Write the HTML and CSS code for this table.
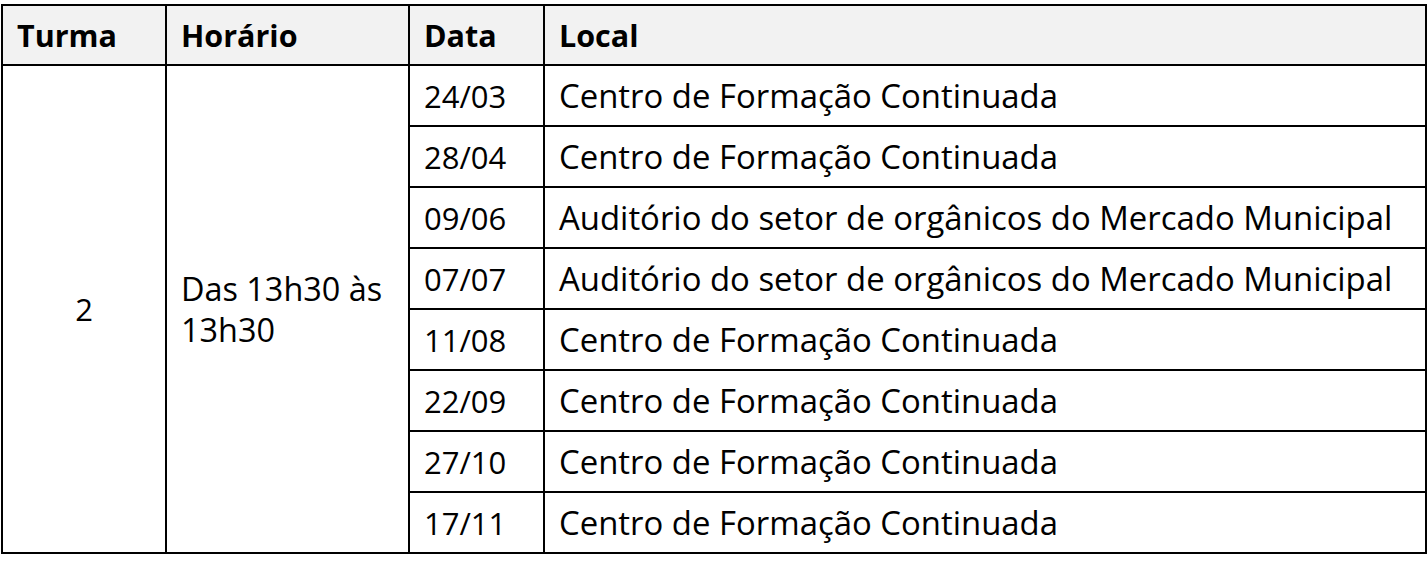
FILE: index.html
```html
<!DOCTYPE html>
<html lang="pt">
<head>
<meta charset="utf-8">
<title>Turma</title>
<link rel="stylesheet" href="styles.css">
</head>
<body>
<table class="agenda">
  <colgroup>
    <col class="c-turma">
    <col class="c-horario">
    <col class="c-data">
    <col class="c-local">
  </colgroup>
  <thead>
    <tr class="head">
      <th>Turma</th>
      <th>Horário</th>
      <th>Data</th>
      <th>Local</th>
    </tr>
  </thead>
  <tbody>
    <tr>
      <td class="turma" rowspan="8">2</td>
      <td class="horario" rowspan="8">Das 13h30 às 13h30</td>
      <td class="data">24/03</td>
      <td class="local">Centro de Formação Continuada</td>
    </tr>
    <tr><td class="data">28/04</td><td class="local">Centro de Formação Continuada</td></tr>
    <tr><td class="data">09/06</td><td class="local">Auditório do setor de orgânicos do Mercado Municipal</td></tr>
    <tr><td class="data">07/07</td><td class="local">Auditório do setor de orgânicos do Mercado Municipal</td></tr>
    <tr><td class="data">11/08</td><td class="local">Centro de Formação Continuada</td></tr>
    <tr><td class="data">22/09</td><td class="local">Centro de Formação Continuada</td></tr>
    <tr><td class="data">27/10</td><td class="local">Centro de Formação Continuada</td></tr>
    <tr><td class="data">17/11</td><td class="local">Centro de Formação Continuada</td></tr>
  </tbody>
</table>
</body>
</html>
```
FILE: styles.css
```css
html, body {
  margin: 0;
  padding: 0;
  background: #ffffff;
}

body {
  padding: 4px 0 0 1px;
  font-family: "Open Sans", "Noto Sans", sans-serif;
  color: #000000;
}

.agenda {
  border-collapse: collapse;
  table-layout: fixed;
  width: 1424px;
  font-size: 31px;
  line-height: 40px;
}

.c-turma { width: 164px; }
.c-horario { width: 243px; }
.c-data { width: 135px; }
.c-local { width: 882px; }

.agenda th,
.agenda td {
  border: 2px solid #000000;
  padding: 0 0 0 14px;
  text-align: left;
  vertical-align: middle;
  height: 61px;
  box-sizing: border-box;
  white-space: nowrap;
}

.agenda th {
  background: #f2f2f2;
  font-weight: 700;
  font-size: 30.5px;
  height: 60px;
}

.agenda td.turma {
  text-align: center;
  padding: 0;
}

.agenda td.horario {
  white-space: normal;
  padding-right: 6px;
  font-size: 32.4px;
  line-height: 41px;
}

.agenda td.data {
  font-size: 31px;
}

.agenda td.local {
  font-size: 32.9px;
}
```
